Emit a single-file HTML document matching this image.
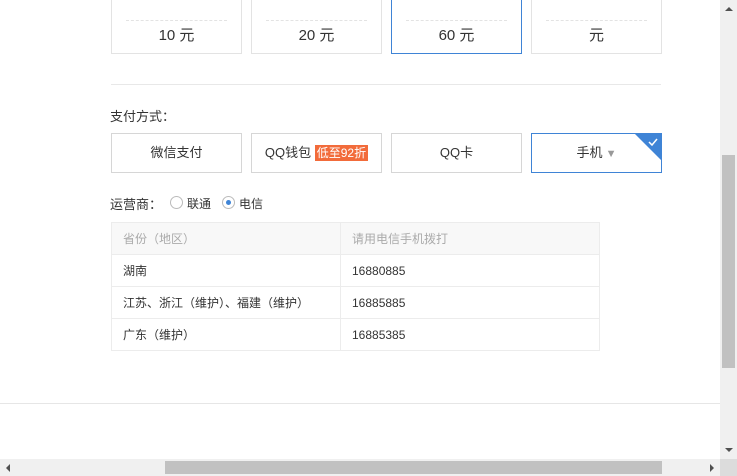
<!DOCTYPE html>
<html><head><meta charset="utf-8"><style>
*{margin:0;padding:0;box-sizing:border-box}
body{width:737px;height:476px;overflow:hidden;background:#fff;position:relative;font-family:"Liberation Sans","Noto Sans CJK SC",sans-serif;color:#333}
.a{position:absolute}
.box{position:absolute;top:-10px;height:64px;width:131px;border:1px solid #e3e3e3;text-align:center}
.box .d{position:absolute;left:14px;right:14px;top:29px;border-top:1px dashed #e3e3e3}
.box .t{position:absolute;left:0;right:0;top:35px;font-size:15px;line-height:20px}
.btn{position:absolute;top:133px;height:40px;width:131px;border:1px solid #d6d6d6;text-align:center;font-size:13px;line-height:38px}
table{position:absolute;left:111px;top:222px;width:489px;border-collapse:collapse;font-size:12px}
td{border:1px solid #ececec;height:32px;padding-left:11px}
tr.h td{background:#f8f8f8;color:#aaa}
</style></head><body>
<div class="box" style="left:111px"><div class="d"></div><div class="t">10 元</div></div>
<div class="box" style="left:251px"><div class="d"></div><div class="t">20 元</div></div>
<div class="box" style="left:391px;border:1px solid #3f84d6"><div class="d"></div><div class="t">60 元</div></div>
<div class="box" style="left:531px"><div class="d"></div><div class="t">元</div></div>
<div class="a" style="left:111px;top:84px;width:550px;border-top:1px solid #e8e8e8"></div>
<div class="a" style="left:110px;top:106px;font-size:13px">支付方式：</div>
<div class="btn" style="left:111px">微信支付</div>
<div class="btn" style="left:251px">QQ钱包 <span style="background:#f26b3a;color:#fff;padding:1px 2px;font-size:12px;line-height:16px">低至92折</span></div>
<div class="btn" style="left:391px">QQ卡</div>
<div class="btn" style="left:531px;border:1px solid #3f84d6;overflow:hidden">手机<span style="color:#999;font-size:11px"> ▼</span>
<div class="a" style="right:0;top:0;width:0;height:0;border-top:26px solid #3f84d6;border-left:26px solid transparent"></div>
<svg class="a" style="right:2px;top:3px" width="12" height="10"><path d="M2 5 L5 8 L10 2" stroke="#fff" stroke-width="1.5" fill="none"/></svg></div>
<div class="a" style="left:110px;top:194px;font-size:13px">运营商：</div>
<div class="a" style="left:170px;top:196px;width:13px;height:13px;border:1px solid #bbb;border-radius:50%"></div>
<div class="a" style="left:187px;top:195px;font-size:12px">联通</div>
<div class="a" style="left:222px;top:196px;width:13px;height:13px;border:1px solid #bbb;border-radius:50%"><div class="a" style="left:3px;top:3px;width:5px;height:5px;border-radius:50%;background:#3f84d6"></div></div>
<div class="a" style="left:239px;top:195px;font-size:12px">电信</div>
<table>
<tr class="h"><td style="width:229px">省份（地区）</td><td>请用电信手机拨打</td></tr>
<tr><td>湖南</td><td>16880885</td></tr>
<tr><td>江苏、浙江（维护）、福建（维护）</td><td>16885885</td></tr>
<tr><td>广东（维护）</td><td>16885385</td></tr>
</table>
<div class="a" style="left:0;top:403px;width:720px;border-top:1px solid #e6e6e6"></div>
<div class="a" style="left:720px;top:0;width:17px;height:459px;background:#f0f0f0"></div>
<div class="a" style="left:722px;top:155px;width:13px;height:213px;background:#c1c1c1"></div>
<div class="a" style="left:725px;top:7px;border-left:4px solid transparent;border-right:4px solid transparent;border-bottom:4px solid #505050"></div>
<div class="a" style="left:725px;top:448px;border-left:4px solid transparent;border-right:4px solid transparent;border-top:4px solid #505050"></div>
<div class="a" style="left:0;top:459px;width:720px;height:17px;background:#f0f0f0"></div>
<div class="a" style="left:165px;top:461px;width:497px;height:13px;background:#c1c1c1"></div>
<div class="a" style="left:6px;top:464px;border-top:4px solid transparent;border-bottom:4px solid transparent;border-right:4px solid #505050"></div>
<div class="a" style="left:710px;top:464px;border-top:4px solid transparent;border-bottom:4px solid transparent;border-left:4px solid #505050"></div>
<div class="a" style="left:720px;top:459px;width:17px;height:17px;background:#dcdcdc"></div>
</body></html>
